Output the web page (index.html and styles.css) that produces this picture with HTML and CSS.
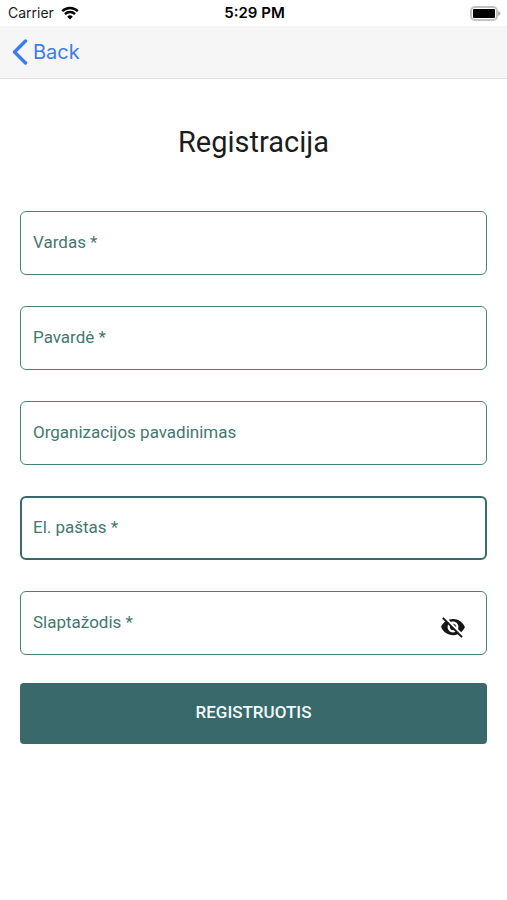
FILE: index.html
```html
<!DOCTYPE html>
<html lang="lt">
<head>
<meta charset="utf-8">
<meta name="viewport" content="width=device-width, initial-scale=1">
<title>Registracija</title>
<link rel="stylesheet" href="styles.css">
</head>
<body>
<div class="status-bar">
  <div class="carrier">
    <span>Carrier</span>
    <svg class="wifi" viewBox="0 0 18 14" aria-hidden="true">
      <path d="M1.2 5.2a11.2 11.2 0 0 1 15.6 0" />
      <path d="M4 8.1a7.2 7.2 0 0 1 10 0" />
      <path class="wifi-dot" d="M9 13.6 6.2 10.7a4 4 0 0 1 5.6 0z" />
    </svg>
  </div>
  <span class="clock">5:29 PM</span>
  <svg class="battery" viewBox="0 0 31 15" aria-hidden="true">
    <rect class="battery-case" x="1" y="1" width="26" height="13" rx="4" />
    <rect x="3" y="3" width="22" height="9" rx="1" />
    <path class="battery-tip" d="M28 5q2.5.8 2.5 2.5T28 10z" />
  </svg>
</div>
<header class="nav-bar">
  <a class="back" href="#">
    <svg class="chevron" viewBox="0 0 16 26" aria-hidden="true"><path d="M13.5 2 2.500 13l11 11" /></svg>
    <span>Back</span>
  </a>
</header>
<main class="content">
  <h1 class="title">Registracija</h1>
  <form class="form">
    <div class="field">
      <input class="input" id="first-name" type="text">
      <label class="label" for="first-name">Vardas *</label>
    </div>
    <div class="field">
      <input class="input" id="last-name" type="text">
      <label class="label" for="last-name">Pavardė *</label>
    </div>
    <div class="field">
      <input class="input" id="organization" type="text">
      <label class="label" for="organization">Organizacijos pavadinimas</label>
    </div>
    <div class="field">
      <input class="input input-active" id="email" type="email">
      <label class="label" for="email">El. paštas *</label>
    </div>
    <div class="field">
      <input class="input" id="password" type="password">
      <label class="label" for="password">Slaptažodis *</label>
      <button class="toggle" type="button" aria-label="Rodyti slaptažodį">
        <svg class="eye" viewBox="0 0 24 24" aria-hidden="true"><path d="M12 7c2.76 0 5 2.24 5 5 0 .65-.13 1.26-.36 1.83l2.92 2.92c1.51-1.26 2.7-2.89 3.43-4.75-1.73-4.39-6-7.5-11-7.5-1.4 0-2.74.25-3.98.7l2.16 2.16C10.74 7.13 11.35 7 12 7zM2 4.27l2.28 2.28.46.46C3.08 8.3 1.78 10.02 1 12c1.73 4.39 6 7.5 11 7.5 1.55 0 3.03-.3 4.38-.84l.42.42L19.73 22 21 20.73 3.27 3 2 4.27zM7.53 9.8l1.55 1.55c-.05.21-.08.43-.08.65 0 1.66 1.34 3 3 3 .22 0 .44-.03.65-.08l1.55 1.55c-.67.33-1.41.53-2.2.53-2.76 0-5-2.24-5-5 0-.79.2-1.53.53-2.2zm4.31-.78l3.15 3.15.02-.16c0-1.66-1.34-3-3-3l-.17.01z" /></svg>
      </button>
    </div>
    <button class="submit" type="submit">REGISTRUOTIS</button>
  </form>
</main>
</body>
</html>
```
FILE: styles.css
```css
* {
  box-sizing: border-box;
}

body {
  margin: 0;
  background: #fff;
  color: #1c1c1c;
  font-family: Roboto, "Liberation Sans", sans-serif;
}

.status-bar {
  display: grid;
  grid-template-columns: 1fr auto 1fr;
  align-items: center;
  height: 26px;
  padding: 0 6px 0 8px;
  font: 14px/26px Inter, "Liberation Sans", sans-serif;
}

.carrier {
  display: flex;
  align-items: center;
  gap: 7px;
}

.wifi {
  width: 18px;
  height: 14px;
  fill: none;
  stroke: #000;
  stroke-width: 2.5;
}

.wifi-dot {
  fill: #000;
  stroke: none;
}

.clock {
  font-size: 15px;
  font-weight: 600;
  color: #000;
}

.battery {
  width: 31px;
  height: 15px;
  justify-self: end;
}

.battery-case {
  fill: none;
  stroke: #c2c2c2;
  stroke-width: 2;
}

.battery-tip {
  fill: #b0b0b0;
}

.nav-bar {
  display: flex;
  align-items: center;
  height: 53px;
  padding: 0 12px;
  border-bottom: 1px solid #dedede;
  background: #f6f6f6;
}

.back {
  display: flex;
  align-items: center;
  gap: 5px;
  color: #3b7df0;
  font: 20px/26px Inter, "Liberation Sans", sans-serif;
  text-decoration: none;
}

.chevron {
  width: 16px;
  height: 26px;
  fill: none;
  stroke: currentColor;
  stroke-width: 3.4;
  stroke-linecap: round;
  stroke-linejoin: round;
}

.content {
  padding: 43px 20px;
}

.title {
  margin: 0 0 49px;
  font-size: 29px;
  font-weight: 400;
  line-height: 40px;
  text-align: center;
}

.form {
  display: flex;
  flex-direction: column;
  gap: 31px;
}

.field {
  display: grid;
  grid-template-columns: 1fr auto;
  align-items: center;
}

.input {
  grid-area: 1 / 1 / 2 / 3;
  width: 100%;
  height: 64px;
  padding: 0 12px;
  border: 1px solid #4d7f79;
  border-radius: 6px;
  outline: 0;
  background: #fff;
  color: #1c1c1c;
  font: inherit;
  font-size: 17px;
}

.input-active,
.input:focus {
  border: 2px solid #39696b;
}

.label {
  grid-area: 1 / 1 / 2 / 2;
  justify-self: start;
  padding: 0 0 2px 13px;
  color: #437870;
  font-size: 17px;
  line-height: 24px;
  pointer-events: none;
}

.toggle {
  grid-area: 1 / 2 / 2 / 3;
  margin: 8px 21px 0 0;
  padding: 0;
  border: 0;
  background: none;
}

.eye {
  display: block;
  width: 26px;
  height: 26px;
  fill: #161616;
}

.submit {
  height: 61px;
  margin-top: -3px;
  padding: 0 16px 3px;
  border: 0;
  border-radius: 4px;
  background: #39696b;
  color: #f2fbfb;
  font: inherit;
  font-size: 17px;
  font-weight: 500;
}
```
